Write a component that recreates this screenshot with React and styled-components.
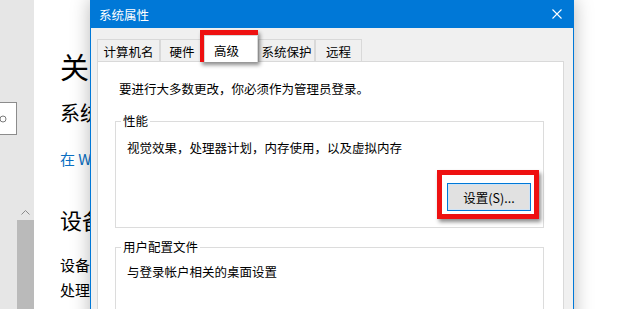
import React from 'react'
import styled, { createGlobalStyle } from 'styled-components'

const GlobalStyle = createGlobalStyle`
  html, body {
    margin: 0;
    padding: 0;
  }
  body {
    width: 620px;
    height: 309px;
    overflow: hidden;
    background: #fff;
    font-family: "Noto Sans CJK SC", "Noto Sans", sans-serif;
  }
`

const Screen = styled.div`
  position: relative;
  width: 620px;
  height: 309px;
  overflow: hidden;
  display: flex;
`

const Sidebar = styled.div`
  width: 34px;
  flex-shrink: 0;
  background: #e6e6e6;
  display: flex;
  flex-direction: column;
  overflow: hidden;
`

const SearchBox = styled.div`
  margin: 102px 0 0 -40px;
  width: 57px;
  height: 33px;
  box-sizing: border-box;
  border: 1px solid #8c8c8c;
  background: #fff;
  display: flex;
  align-items: center;
  justify-content: flex-end;
  padding-right: 9px;
`

const ScrollArrow = styled.div`
  margin: 72px 0 0 17px;
  width: 17px;
  height: 10px;
  display: flex;
  align-items: center;
  justify-content: center;
`

const ScrollThumb = styled.div`
  margin: 3px 0 0 17px;
  flex: 1;
  background: #bababa;
`

/* the settings page behind the dialog; cut where the dialog starts */
const Main = styled.main`
  width: 56px;
  flex-shrink: 0;
  overflow: hidden;
  padding-left: 26px;
  box-sizing: border-box;
  display: flex;
  flex-direction: column;
  white-space: nowrap;
  color: #000;
`

const PageText = styled.div`
  margin-top: ${({ $top }) => $top}px;
  font-size: ${({ $size }) => $size}px;
  line-height: ${({ $line }) => $line}px;
  color: ${({ $link }) => ($link ? '#0a6fc2' : '#000')};
`

const Dialog = styled.div`
  position: absolute;
  left: 90px;
  top: -1px;
  width: 484px;
  height: 340px;
  box-sizing: border-box;
  border: 1px solid #0078d7;
  background: #f0f0f0;
  box-shadow: 0 0 18px rgba(0, 0, 0, 0.28);
  display: flex;
  flex-direction: column;
  font-size: 12.5px;
  color: #000;
`

const TitleBar = styled.div`
  height: 28px;
  flex-shrink: 0;
  background: #0078d7;
  color: #fff;
  display: flex;
  align-items: center;
  justify-content: space-between;
  padding: 0 11px 0 8px;
`

const DialogBody = styled.div`
  flex: 1;
  display: flex;
  flex-direction: column;
  padding: 7px 9px 0 6px;
`

const TabRow = styled.div`
  height: 26px;
  display: flex;
  align-items: flex-end;
`

const Tab = styled.div`
  position: relative;
  width: ${({ $width }) => $width}px;
  height: ${({ $active }) => ($active ? 27 : 22)}px;
  margin-bottom: ${({ $active }) => ($active ? -1 : 0)}px;
  box-sizing: border-box;
  border: 1px solid #d9d9d9;
  border-bottom: none;
  background: ${({ $active }) => ($active ? '#fff' : '#f0f0f0')};
  display: flex;
  align-items: center;
  justify-content: center;
  padding: 2px ${({ $active }) => ($active ? 9 : 0)}px 0 0;
  z-index: ${({ $active }) => ($active ? 2 : 1)};
`

const Annotated = styled.div`
  position: relative;
  z-index: 3;

  &::after {
    content: '';
    position: absolute;
    inset: ${({ $inset }) => $inset};
    border: 5px solid #ee1111;
    box-shadow: 2px 3px 4px rgba(0, 0, 0, 0.45);
    pointer-events: none;
  }
`

const Panel = styled.div`
  flex: 1;
  background: #fff;
  border: 1px solid #d9d9d9;
  padding: 19px 19px 0 17px;
  display: flex;
  flex-direction: column;
`

const Intro = styled.div`
  margin-left: 4px;
  line-height: 16px;
`

const Group = styled.section`
  position: relative;
  margin-top: ${({ $top }) => $top}px;
  height: ${({ $height }) => $height}px;
  box-sizing: border-box;
  border: 1px solid #dcdcdc;
  padding: ${({ $padTop }) => $padTop}px 12px 0 11px;
  display: flex;
  flex-direction: column;
`

const Legend = styled.span`
  position: absolute;
  top: -9px;
  left: 5px;
  padding: 0 2px;
  background: #fff;
  line-height: 16px;
`

const GroupText = styled.div`
  line-height: 16px;
`

const ButtonRow = styled.div`
  margin-top: 27px;
  display: flex;
  justify-content: flex-end;
`

const Button = styled.button`
  width: 84px;
  height: 28px;
  box-sizing: border-box;
  padding: 0;
  border: 1px solid #0078d7;
  box-shadow: inset 0 0 0 1px #cfe3f5;
  background: #e1e1e1;
  font-family: inherit;
  font-size: 12.5px;
  color: #000;
`

const App = () => {
  const tabs = [
    { name: '计算机名', width: 63 },
    { name: '硬件', width: 44 },
    { name: '高级', width: 54, active: true },
    { name: '系统保护', width: 57 },
    { name: '远程', width: 47 },
  ]

  return (
    <Screen>
      <GlobalStyle />
      <Sidebar>
        <SearchBox>
          <svg width="8" height="8" viewBox="0 0 8 8">
            <circle cx="4" cy="4" r="3" fill="none" stroke="#7a7a7a" strokeWidth="1" />
          </svg>
        </SearchBox>
        <ScrollArrow>
          <svg width="9" height="5" viewBox="0 0 9 5">
            <polyline points="0.5,4.5 4.5,0.5 8.5,4.5" fill="none" stroke="#8a8a8a" strokeWidth="1" />
          </svg>
        </ScrollArrow>
        <ScrollThumb />
      </Sidebar>

      <Main>
        <PageText $top={47} $size={29} $line={38}>关于</PageText>
        <PageText $top={14} $size={20} $line={28}>系统安全</PageText>
        <PageText $top={21} $size={15} $line={22} $link>在 Windows 安全中心中查看详细信息</PageText>
        <PageText $top={34} $size={22} $line={30}>设备规格</PageText>
        <PageText $top={20} $size={15} $line={22}>设备名称</PageText>
        <PageText $top={3} $size={15} $line={22}>处理器</PageText>
      </Main>

      <Dialog>
        <TitleBar>
          <span>系统属性</span>
          <svg width="10" height="10" viewBox="0 0 10 10">
            <path d="M0.5 0.5 L9.5 9.5 M9.5 0.5 L0.5 9.5" stroke="#fff" strokeWidth="1.1" />
          </svg>
        </TitleBar>
        <DialogBody>
          <TabRow>
            {tabs.map((tab) =>
              tab.active ? (
                <Annotated key={tab.name} $inset="-5px 0 -1px -4px">
                  <Tab $width={tab.width} $active>
                    {tab.name}
                  </Tab>
                </Annotated>
              ) : (
                <Tab key={tab.name} $width={tab.width}>
                  {tab.name}
                </Tab>
              )
            )}
          </TabRow>
          <Panel>
            <Intro>要进行大多数更改，你必须作为管理员登录。</Intro>
            <Group $top={24} $height={107} $padTop={18}>
              <Legend>性能</Legend>
              <GroupText>视觉效果，处理器计划，内存使用，以及虚拟内存</GroupText>
              <ButtonRow>
                <Annotated $inset="-13px -8px -8px -10px">
                  <Button>设置(S)...</Button>
                </Annotated>
              </ButtonRow>
            </Group>
            <Group $top={19} $height={120} $padTop={16}>
              <Legend>用户配置文件</Legend>
              <GroupText>与登录帐户相关的桌面设置</GroupText>
            </Group>
          </Panel>
        </DialogBody>
      </Dialog>
    </Screen>
  )
}

export default App
